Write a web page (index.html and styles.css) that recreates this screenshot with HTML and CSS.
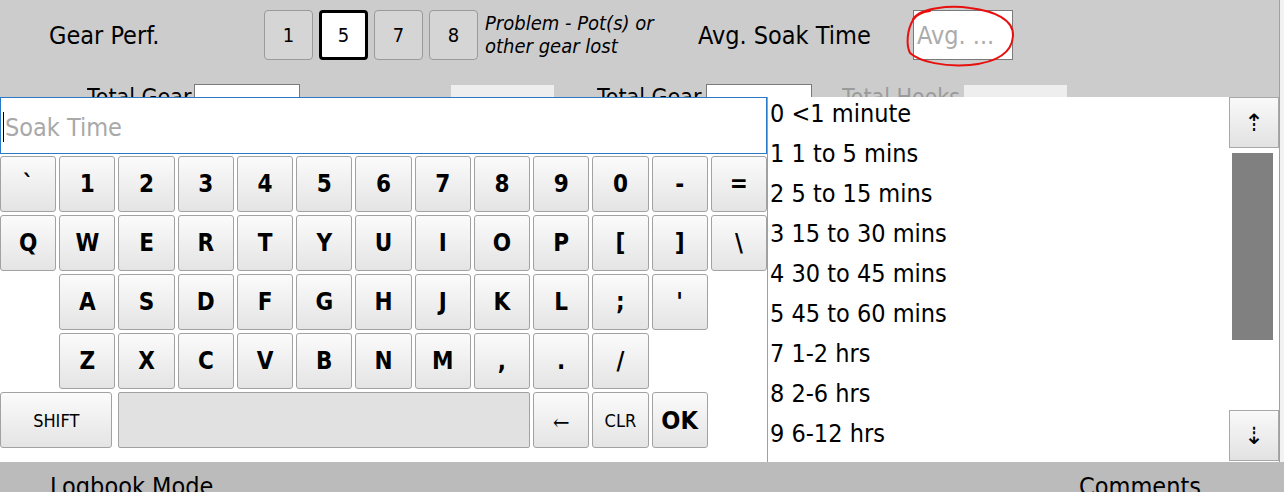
FILE: index.html
```html
<!DOCTYPE html>
<html>
<head>
<meta charset="utf-8">
<title>Soak Time</title>
<link rel="stylesheet" href="styles.css">
</head>
<body>
<div class="screen">
  <div class="main">
    <div class="content">
      <div class="row-top">
        <span class="label gear-label">Gear Perf.</span>
        <div class="gear-btns">
          <div class="gbtn">1</div>
          <div class="gbtn sel">5</div>
          <div class="gbtn">7</div>
          <div class="gbtn">8</div>
        </div>
        <div class="problem">Problem - Pot(s) or<br>other gear lost</div>
        <span class="label soak-label">Avg. Soak Time</span>
        <div class="avg-input">Avg. ...</div>
      </div>
      <div class="row-totals">
        <span class="label small tot-label">Total Gear</span>
        <div class="tbox"></div>
        <div class="tbox light gap1"></div>
        <span class="label small tot-label2">Total Gear</span>
        <div class="tbox"></div>
        <span class="label small hooks-label">Total Hooks</span>
        <div class="tbox light"></div>
      </div>
    </div>
    <div class="edge"></div>
  </div>
  <div class="footer">
    <span class="foot-left">Logbook Mode</span>
    <span class="foot-right">Comments</span>
  </div>

  <svg class="annot" width="125" height="72" viewBox="0 0 125 72">
    <path d="M13 19 C20 8, 50 5, 70 8 C95 11, 114 20, 113 36 C112 51, 100 62, 70 65 C45 67, 20 62, 10 53 C6 45, 7 30, 13 20 C16 15, 22 12, 30 11" fill="none" stroke="#e8100e" stroke-width="2" stroke-linecap="round"/>
  </svg>

  <div class="popup">
    <div class="kb-col">
      <div class="soak-input"><span class="caret"></span><span class="ph">Soak Time</span></div>
      <div class="keys">
        <div class="key">`</div><div class="key">1</div><div class="key">2</div><div class="key">3</div><div class="key">4</div><div class="key">5</div><div class="key">6</div><div class="key">7</div><div class="key">8</div><div class="key">9</div><div class="key">0</div><div class="key">-</div><div class="key">=</div>
        <div class="key">Q</div><div class="key">W</div><div class="key">E</div><div class="key">R</div><div class="key">T</div><div class="key">Y</div><div class="key">U</div><div class="key">I</div><div class="key">O</div><div class="key">P</div><div class="key">[</div><div class="key">]</div><div class="key">\</div>
        <div class="key c2">A</div><div class="key">S</div><div class="key">D</div><div class="key">F</div><div class="key">G</div><div class="key">H</div><div class="key">J</div><div class="key">K</div><div class="key">L</div><div class="key">;</div><div class="key">'</div>
        <div class="key c2">Z</div><div class="key">X</div><div class="key">C</div><div class="key">V</div><div class="key">B</div><div class="key">N</div><div class="key">M</div><div class="key">,</div><div class="key">.</div><div class="key">/</div>
        <div class="key shift">SHIFT</div>
        <div class="key space"></div>
        <div class="key back">←</div>
        <div class="key clr">CLR</div>
        <div class="key ok">OK</div>
      </div>
    </div>
    <div class="list">
      <div class="items">
        <div class="item">0 &lt;1 minute</div>
        <div class="item">1 1 to 5 mins</div>
        <div class="item">2 5 to 15 mins</div>
        <div class="item">3 15 to 30 mins</div>
        <div class="item">4 30 to 45 mins</div>
        <div class="item">5 45 to 60 mins</div>
        <div class="item">7 1-2 hrs</div>
        <div class="item">8 2-6 hrs</div>
        <div class="item">9 6-12 hrs</div>
      </div>
      <div class="sb-btn sb-up">⇡</div>
      <div class="sb-thumb"></div>
      <div class="sb-btn sb-down">⇣</div>
    </div>
  </div>
</div>
</body>
</html>
```

FILE: styles.css
```css
* { box-sizing: border-box; }

html, body {
  margin: 0;
  padding: 0;
}

body {
  font-family: "DejaVu Sans Condensed", "DejaVu Sans", sans-serif;
  font-stretch: condensed;
  color: #000;
  background: #cccccc;
}

.screen {
  position: relative;
  width: 1284px;
  height: 492px;
  overflow: hidden;
  display: flex;
  flex-direction: column;
}

.main {
  display: flex;
  height: 462px;
}

.content {
  width: 1279px;
  background: #cccccc;
}

.edge {
  flex: 1;
  border-left: 1px solid #a0a0a0;
  background: #f2f2f2;
}

.label {
  font-size: 25px;
  white-space: nowrap;
}

.label.small {
  font-size: 23px;
  overflow: hidden;
}

.row-top {
  display: flex;
  align-items: center;
  height: 50px;
  margin-top: 10px;
  padding-left: 49px;
}

.gear-label { width: 215px; }

.gear-btns {
  display: flex;
  gap: 6px;
}

.gbtn {
  width: 49px;
  height: 50px;
  border: 1px solid #9a9a9a;
  border-radius: 4px;
  background: #d5d5d5;
  display: flex;
  align-items: center;
  justify-content: center;
  font-size: 20px;
}

.gbtn.sel {
  background: #ffffff;
  border: 3px solid #000;
}

.problem {
  width: 213px;
  margin-left: 7px;
  font-style: italic;
  font-size: 20px;
  line-height: 23px;
  margin-top: -1px;
}

.soak-label { width: 215px; }

.avg-input {
  width: 100px;
  height: 50px;
  background: #fff;
  border: 1px solid #7a7a7a;
  color: #ababab;
  font-size: 25px;
  padding-left: 3px;
  display: flex;
  align-items: center;
}

.row-totals {
  display: flex;
  align-items: flex-start;
  margin-top: 24px;
  padding-left: 87px;
}

.tot-label { width: 107px; }

.tbox {
  width: 106px;
  height: 30px;
  background: #fff;
  border: 1px solid #7a7a7a;
}

.tbox.light {
  width: 103px;
  background: #eeeeee;
  border: none;
  margin-top: 1px;
}

.gap1 { margin-left: 151px; }

.tot-label2 {
  width: 109px;
  margin-left: 43px;
}

.hooks-label {
  width: 122px;
  margin-left: 30px;
  color: #9a9a9a;
}

.footer {
  height: 30px;
  background: #bbbbbb;
  display: flex;
  font-size: 25px;
  padding-top: 10px;
  white-space: nowrap;
}

.foot-left {
  margin-left: 50px;
  width: 1029px;
}

.annot {
  position: absolute;
  left: 900px;
  top: 0;
}

.popup {
  position: absolute;
  left: 0;
  top: 97px;
  width: 1279px;
  height: 365px;
  background: #fff;
  display: flex;
}

.kb-col {
  width: 767px;
  flex: none;
}

.soak-input {
  height: 57px;
  border: 1px solid #2a78c8;
  display: flex;
  align-items: center;
  padding-left: 2px;
  padding-top: 3px;
}

.caret {
  width: 1px;
  height: 30px;
  background: #000;
  margin-right: 1px;
}

.ph {
  color: #a9a9a9;
  font-size: 25px;
}

.keys {
  margin-top: 2px;
  display: grid;
  grid-template-columns: repeat(13, 1fr);
  grid-auto-rows: 56px;
  gap: 3px;
}

.key {
  border: 1px solid #a2a2a2;
  border-radius: 3px;
  background: linear-gradient(#fbfbfb, #e4e4e4);
  display: flex;
  align-items: center;
  justify-content: center;
  font-weight: bold;
  font-size: 24px;
}

.c2 { grid-column-start: 2; }

.shift {
  grid-column: 1 / span 2;
  font-weight: normal;
  font-size: 18px;
  margin-right: 3px;
}

.space {
  grid-column: 3 / span 7;
  background: #e1e1e1;
  border-radius: 2px;
}

.back {
  font-weight: normal;
  font-size: 22px;
  font-family: "DejaVu Serif", serif;
  padding-top: 4px;
}

.clr {
  font-weight: normal;
  font-size: 18px;
}

.ok {
  font-size: 25px;
}

.list {
  flex: 1;
  position: relative;
  border-left: 1px solid #a0a0a0;
  overflow: hidden;
}

.items {
  margin-top: -3px;
  padding-left: 2px;
}

.item {
  font-size: 25px;
  line-height: 40px;
  white-space: nowrap;
}

.sb-btn {
  position: absolute;
  right: 0;
  width: 50px;
  height: 51px;
  border: 1px solid #a8a8a8;
  background: linear-gradient(#f9f9f9, #e2e2e2);
  display: flex;
  align-items: center;
  justify-content: center;
  font-family: "DejaVu Sans", sans-serif;
  font-stretch: normal;
  font-size: 24px;
}

.sb-up { top: 0; }
.sb-down { top: 313px; }

.sb-thumb {
  position: absolute;
  right: 6px;
  top: 56px;
  width: 41px;
  height: 187px;
  background: #808080;
}
```
